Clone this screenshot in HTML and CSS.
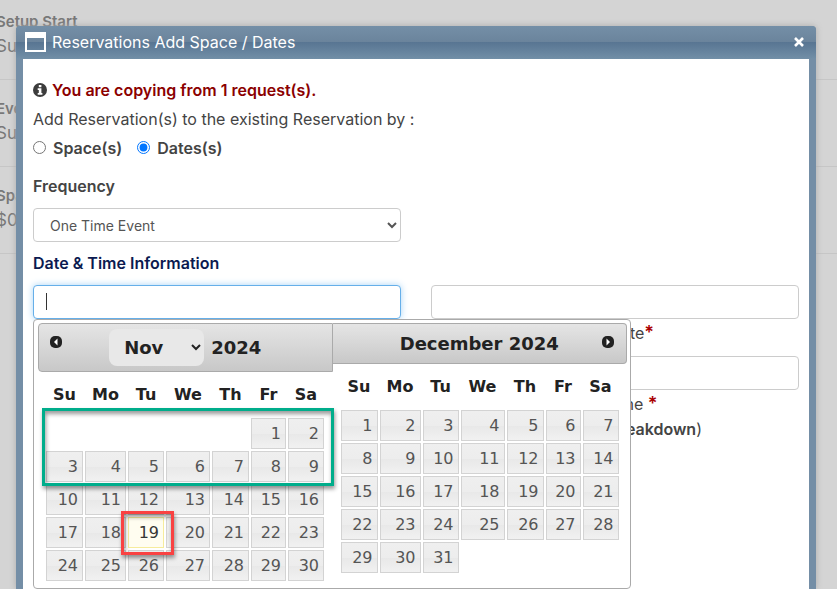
FILE: index.html
```html
<!DOCTYPE html>
<html lang="en">
<head>
<meta charset="utf-8">
<title>Reservations Add Space / Dates</title>
<link rel="stylesheet" href="styles.css">
</head>
<body>
<main class="summary">
  <section><b>Setup Start</b><span>Sun</span></section>
  <section><b>Event</b><span>Sun</span></section>
  <section><b>Space</b><span>$0</span></section>
</main>
<div class="dialog" role="dialog" aria-labelledby="dialog-title">
  <header class="titlebar">
    <svg class="window-icon" viewBox="0 0 21 20" aria-hidden="true"><path fill="#fff" fill-rule="evenodd" d="M0 0h21v20H0zM2 6v12h17V6z"/></svg>
    <h1 id="dialog-title">Reservations Add Space / Dates</h1>
    <button class="close" type="button" aria-label="Close"><svg viewBox="0 0 12 12"><path d="M2 2l8 8M10 2l-8 8" stroke="#fff" stroke-width="2.600" fill="none"/></svg></button>
  </header>
  <form class="content">
    <p class="notice"><svg viewBox="0 0 14 14" aria-hidden="true"><circle cx="7" cy="7" r="7" fill="#3c3c3c"/><path fill="#fff" d="M5.800 2h2.600v2.200H5.800zM4.700 5.300h3.700v4.600h1v1.800H4.700V9.900h1.100V7.100H4.700z"/></svg><strong>You are copying from 1 request(s).</strong></p>
    <p class="line">Add Reservation(s) to the existing Reservation by :</p>
    <div class="choices">
      <label><input type="radio" name="by">Space(s)</label>
      <label><input type="radio" name="by" checked>Dates(s)</label>
    </div>
    <label class="heading" for="frequency">Frequency</label>
    <div class="fields">
      <select class="control" id="frequency"><option>One Time Event</option></select>
    </div>
    <h2 class="heading section">Date &amp; Time Information</h2>
    <div class="fields">
      <div class="field date">
        <input class="control active" type="text" aria-label="Start Date">
        <span class="caret"></span>
        <div class="picker">
          <div class="month">
            <div class="bar first">
              <button type="button" class="arrow prev" aria-label="Previous"><svg viewBox="0 0 12 12"><rect width="12" height="12" rx="5" fill="#222"/><path fill="#fff" d="M4 6l3.500-3.500v7z"/></svg></button>
              <select aria-label="Month"><option>Nov</option></select><span>2024</span>
            </div>
            <div class="days" id="november"><div class="range-mark"></div></div>
          </div>
          <div class="month">
            <div class="bar last"><span>December 2024</span>
              <button type="button" class="arrow next" aria-label="Next"><svg viewBox="0 0 12 12"><rect width="12" height="12" rx="5" fill="#222"/><path fill="#fff" d="M8 6L4.500 2.500v7z"/></svg></button>
            </div>
            <div class="days" id="december"></div>
          </div>
        </div>
      </div>
      <div class="field">
        <input class="control" type="text" id="end-date">
        <label for="end-date">End Date<b class="required">*</b></label>
      </div>
      <div class="field"></div>
      <div class="field">
        <input class="control" type="text" id="end-time">
        <label for="end-time">End Time <b class="required">*</b></label>
        <p>(<b>Including Breakdown</b>)</p>
      </div>
    </div>
  </form>
</div>
<script src="calendar.js"></script>
</body>
</html>
```
FILE: styles.css
```css
* { box-sizing: border-box; }
body {
  margin: 0;
  height: 100vh;
  overflow: hidden;
  position: relative;
  background: #d4d4d4;
  color: #444;
  font: 16px/24px Inter, "Liberation Sans", sans-serif;
}
h1, h2, p { margin: 0; }
b, strong { font-weight: 600; }

.summary { margin-left: -4px; padding-top: 8px; color: #787878; }
.summary section { height: 87px; padding-top: 2px; border-bottom: 1px solid #c6c6c6; }
.summary section:first-child { height: 72px; }
.summary section + section { padding-top: 17px; }
.summary b, .summary span { display: block; }
.summary b { font-size: 15px; }
.summary span { font-size: 17px; }

.dialog {
  position: absolute;
  top: 26px;
  left: 16px;
  right: 21px;
  bottom: 0;
  display: flex;
  flex-direction: column;
  padding: 0 7px;
  background: #748ea6;
  border-radius: 4px 4px 0 0;
  box-shadow: 0 0 6px #aaa;
}
.titlebar {
  display: flex;
  flex: none;
  align-items: center;
  height: 33px;
  margin: 0 -7px;
  padding: 0 11px 2px 9px;
  border-radius: 4px 4px 0 0;
  background: linear-gradient(#748fa7 0, #6b849c 48%, #587592 49%, #728fa7 100%);
}
.titlebar h1 { flex: 1; margin-left: 6px; color: #fff; font-size: 16px; font-weight: 400; }
.window-icon { width: 21px; height: 20px; }
.close { border: 0; padding: 0; background: none; width: 12px; height: 12px; line-height: 0; }
.close svg { width: 12px; height: 12px; }
.content { flex: 1; min-height: 0; padding: 16px 10px 0; background: #fff; }

.notice { display: flex; align-items: center; gap: 5px; height: 30px; color: #8b0000; }
.notice svg { width: 14px; height: 14px; }
.line { height: 29px; line-height: 29px; }
.choices { display: flex; gap: 15px; height: 27px; font-weight: 600; }
.choices label { display: flex; align-items: center; }
.choices input { width: 13px; height: 13px; margin: 0 7px 0 0; }
.heading { display: block; margin: 13px 0 10px; color: #444; font-size: 16px; line-height: 24px; font-weight: 600; }
.heading.section { color: #0b1a50; margin: 9px 0 10px; }

.fields { display: grid; grid-template-columns: 1fr 1fr; column-gap: 30px; row-gap: 10px; }
.field { text-align: center; }
.field label, .field p { display: block; line-height: 24px; }
.field label { height: 27px; line-height: 27px; }
.required { color: #a00; font-size: 18px; }
.control {
  display: block;
  width: 100%;
  height: 34px;
  padding: 0 12px;
  border: 1px solid #ccc;
  border-radius: 4px;
  background: #fff;
  color: #555;
  font: 14px Inter, sans-serif;
}
.control.active { border-color: #66afe9; box-shadow: 0 0 7px #a9d4f5; }
.date { position: relative; }
.caret { position: absolute; left: 13px; top: 8px; width: 1px; height: 17px; background: #333; }

.picker {
  position: absolute;
  z-index: 1;
  top: 34px;
  left: 0;
  display: flex;
  align-items: flex-start;
  width: 598px;
  padding: 3px 3px 6px 4px;
  border: 1px solid #aaa;
  border-radius: 4px;
  background: #fff;
  color: #222;
  font: 16px/24px "DejaVu Sans", sans-serif;
}
.month { flex: 1; }
.bar {
  position: relative;
  display: flex;
  align-items: center;
  justify-content: center;
  height: 41px;
  border: 1px solid #aaa;
  background: linear-gradient(#e5e5e5, #c8c8c8);
  font-size: 18px;
  font-weight: 700;
}
.bar.first { height: 49px; gap: 7px; border-radius: 4px 0 0 4px; }
.bar.last { border-left: 0; border-radius: 0 4px 4px 0; }
.bar select {
  width: 95px;
  height: 37px;
  padding: 0 0 0 11px;
  border: 0;
  border-radius: 8px;
  background: #e8e8e8;
  color: #222;
  font: inherit;
}
.arrow { position: absolute; top: 12px; width: 12px; height: 12px; padding: 0; border: 0; background: none; line-height: 0; }
.arrow svg { width: 12px; height: 12px; }
.prev { left: 11px; }
.next { right: 12px; }

.days { position: relative; padding: 0 7px; }
.days table { width: 280px; table-layout: fixed; border-collapse: collapse; }
.days th { height: 45px; padding: 0; font-weight: 700; }
.days td { padding: 1px; height: 33px; position: relative; }
.days a {
  display: block;
  height: 31px;
  padding-right: 4px;
  border: 1px solid #d3d3d3;
  background: linear-gradient(#efefef 0, #ededed 50%, #e8e8e8 51%, #f1f1f1 100%);
  color: #555;
  line-height: 29px;
  text-align: right;
  text-decoration: none;
}
.days .today a { border-color: #f6ec9c; background: #fffdf0; color: #363636; }
.narrow { width: 37px; }
.regular { width: 38px; }
.medium { width: 39px; }
.wide { width: 43px; }
.widest { width: 46px; }
.range-mark, .day-mark {
  position: absolute;
  z-index: 1;
  border: 3px solid #00ad8b;
  box-shadow: 1px 3px 4px #0006, inset 1px 3px 4px #0006;
  pointer-events: none;
}
.range-mark { top: 36px; left: 4px; right: -1px; height: 78px; }
.day-mark { border-color: #f94242; inset: -5px -9px -6px -6px; }
```
FILE: calendar.js
```js
const names = ["Su", "Mo", "Tu", "We", "Th", "Fr", "Sa"];
const widths = ["medium", "wide", "regular", "widest", "medium", "narrow", "regular"];

function drawMonth(id, offset, count, today) {
  const cols = widths.map(w => `<col class="${w}">`).join("");
  const head = names.map(n => `<th scope="col">${n}</th>`).join("");
  let rows = "";
  for (let start = 1 - offset; start <= count; start += 7) {
    rows += "<tr>";
    for (let day = start; day < start + 7; day++) {
      if (day < 1 || day > count) rows += "<td></td>";
      else if (day === today) rows += `<td class="today"><a href="#">${day}</a><span class="day-mark"></span></td>`;
      else rows += `<td><a href="#">${day}</a></td>`;
    }
    rows += "</tr>";
  }
  document.getElementById(id).insertAdjacentHTML("afterbegin",
    `<table><colgroup>${cols}</colgroup><thead><tr>${head}</tr></thead><tbody>${rows}</tbody></table>`);
}

drawMonth("november", 5, 30, 19);
drawMonth("december", 0, 31);
```
